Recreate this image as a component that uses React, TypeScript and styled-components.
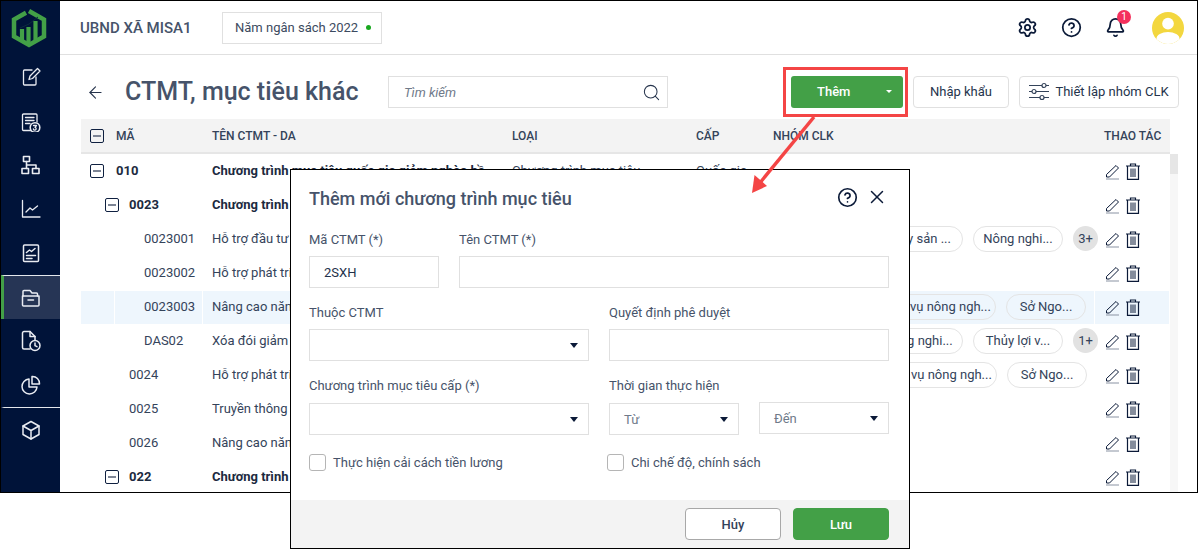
import React from "react";
import styled, { createGlobalStyle } from "styled-components";
import { Bell, CircleHelp, Settings, X, ArrowLeft, Search } from "lucide-react";

const GlobalStyle = createGlobalStyle`
  html, body {
    margin: 0;
    padding: 0;
    background: #fff;
    font-family: Roboto, "Liberation Sans", sans-serif;
    font-size: 13px;
    color: #1c2a40;
  }
  * { box-sizing: border-box; }
`;

const Page = styled.div`
  position: relative;
  width: 1198px;
  height: 549px;
  overflow: hidden;
`;

const Frame = styled.div`
  display: flex;
  width: 1198px;
  height: 493px;
  border: 1px solid #000;
  overflow: hidden;
`;

const Sidebar = styled.nav`
  width: 59px;
  flex: none;
  background: #001339;
  display: flex;
  flex-direction: column;
`;

const LogoBox = styled.div`
  height: 54px;
  display: flex;
  align-items: center;
  justify-content: center;
  padding-right: 3px;
`;

const NavItem = styled.div<{ $active?: boolean; $ruled?: boolean }>`
  height: 44px;
  display: flex;
  align-items: center;
  justify-content: center;
  background: ${(p) => (p.$active ? "#263555" : "transparent")};
  border-left: 3px solid ${(p) => (p.$active ? "#43a047" : "transparent")};
  border-top: ${(p) => (p.$ruled ? "1px solid #e4e7ec" : "0")};
  padding-right: 3px;
`;

const Main = styled.div`
  flex: 1;
  min-width: 0;
  display: flex;
  flex-direction: column;
`;

const Header = styled.header`
  height: 54px;
  flex: none;
  border-bottom: 1px solid #e0e0e0;
  display: flex;
  align-items: center;
  padding: 0 13px 0 20px;
`;

const OrgName = styled.div`
  font-size: 15px;
  font-weight: 500;
  color: #46536a;
  width: 142px;
`;

const YearBox = styled.div`
  width: 160px;
  height: 32px;
  border: 1px solid #e0e0e0;
  display: flex;
  align-items: center;
  justify-content: space-between;
  padding: 0 10px 1px 12px;
  color: #3c4a60;
`;

const GreenDot = styled.span`
  width: 5px;
  height: 5px;
  border-radius: 50%;
  background: #19a81f;
`;

const HeaderIcons = styled.div`
  margin-left: auto;
  display: flex;
  align-items: center;
  color: #0b1a38;
`;

const HeaderIcon = styled.div`
  width: 44px;
  padding-bottom: 1px;
  display: flex;
  align-items: center;
  justify-content: center;
  position: relative;
`;

const Badge = styled.span`
  position: absolute;
  top: -7px;
  left: 24px;
  width: 14px;
  height: 14px;
  border-radius: 50%;
  background: #f4305c;
  color: #fff;
  font-size: 10px;
  line-height: 14px;
  text-align: center;
`;

const Avatar = styled.div`
  width: 32px;
  height: 32px;
  margin-left: 15px;
  border-radius: 50%;
  background: #f3d73f;
  overflow: hidden;
`;

const TitleBar = styled.div`
  height: 64px;
  flex: none;
  display: flex;
  align-items: flex-start;
  padding: 21px 18px 0 26px;
  color: #26344c;
`;

const BackButton = styled.div`
  width: 39px;
  height: 32px;
  display: flex;
  align-items: center;
`;

const PageTitle = styled.h1`
  margin: 0;
  width: 263px;
  font-size: 25px;
  line-height: 32px;
  font-weight: 500;
  color: #46536a;
  white-space: nowrap;
`;

const SearchBox = styled.div`
  width: 280px;
  height: 32px;
  border: 1px solid #e0e0e0;
  display: flex;
  align-items: center;
  justify-content: space-between;
  padding: 0 6px 0 15px;
  font-style: italic;
  color: #6f7a8a;
`;

const Toolbar = styled.div`
  margin-left: auto;
  display: flex;
  gap: 10px;
`;

const AddButton = styled.div`
  width: 112px;
  height: 32px;
  background: #43a047;
  border-radius: 3px;
  color: #fff;
  font-weight: 500;
  display: flex;
  align-items: center;
  padding: 0 0 1px 26px;
  gap: 36px;
`;

const SmallCaret = styled.span`
  width: 0;
  height: 0;
  border-left: 3.5px solid transparent;
  border-right: 3.5px solid transparent;
  border-top: 3.5px solid #fff;
`;

const OutlineButton = styled.div<{ $width: number }>`
  width: ${(p) => p.$width}px;
  height: 32px;
  border: 1px solid #e0e0e0;
  border-radius: 4px;
  padding-bottom: 1px;
  display: flex;
  align-items: center;
  justify-content: center;
  gap: 6px;
  color: #25344c;
`;

const TableArea = styled.div`
  flex: 1;
  min-height: 0;
  margin-left: 21px;
  margin-right: 19px;
  display: flex;
  flex-direction: column;
`;

const columns = "122px 300px 184px 77px 331px 75px";

const HeadRow = styled.div`
  width: 1089px;
  height: 35px;
  flex: none;
  display: grid;
  grid-template-columns: ${columns};
  align-items: center;
  background: #f3f3f3;
  border-bottom: 2px solid #e6e6e6;
  font-size: 12px;
  font-weight: 500;
  color: #34435a;
`;

const HeadCell = styled.div`
  padding-left: 9px;
  white-space: nowrap;
`;

const HeadCode = styled.div`
  display: flex;
  align-items: center;
`;

const TableBody = styled.div`
  flex: 1;
  min-height: 0;
  display: flex;
`;

const Rows = styled.div`
  width: 1089px;
  flex: none;
`;

const ScrollTrack = styled.div`
  width: 8px;
  background: #f7f7f7;
`;

const ScrollThumb = styled.div`
  height: 20px;
  background: #e6e6e6;
`;

const Row = styled.div`
  height: 34px;
  display: grid;
  grid-template-columns: ${columns};
  align-items: stretch;
`;

const Cell = styled.div<{ $hl?: boolean; $bold?: boolean }>`
  padding: 0 0 2px 9px;
  display: flex;
  align-items: center;
  margin-top: 1px;
  min-width: 0;
  white-space: nowrap;
  overflow: hidden;
  font-weight: ${(p) => (p.$bold ? 700 : 400)};
  color: ${(p) => (p.$bold ? "#1c2a40" : "#34435a")};
  background: ${(p) => (p.$hl ? "#eef6fd" : "transparent")};
  border-right: ${(p) => (p.$hl ? "1px solid #fff" : "0")};
`;

const CodeCell = styled(Cell)<{ $indent: number }>`
  padding-left: ${(p) => p.$indent}px;
  background: ${(p) =>
    p.$hl
      ? "linear-gradient(to right, #eef6fd 33px, #fff 33px, #fff 34px, #eef6fd 34px)"
      : "transparent"};
`;

const GroupCell = styled(Cell)<{ $trail?: number }>`
  justify-content: flex-end;
  gap: 10px;
  overflow: visible;
  padding-right: ${(p) => p.$trail ?? 0}px;
`;

const ActionCell = styled(Cell)`
  padding: 0 0 0 10px;
  gap: 6px;
  color: #0b1a38;
`;

const Toggle = styled.span<{ $gap: number }>`
  width: 14px;
  height: 14px;
  flex: none;
  margin-right: ${(p) => p.$gap}px;
  border: 1px solid #0f2040;
  border-radius: 2px;
  display: flex;
  align-items: center;
  justify-content: center;
  &::after {
    content: "";
    width: 8px;
    height: 2px;
    background: #7d8595;
  }
`;

const Chip = styled.span<{ $width: number }>`
  width: ${(p) => p.$width}px;
  height: 26px;
  flex: none;
  border: 1px solid #e4e4e4;
  border-radius: 13px;
  background: transparent;
  display: flex;
  align-items: center;
  justify-content: center;
  font-weight: 400;
  color: #34435a;
`;

const MoreChip = styled.span`
  width: 25px;
  height: 25px;
  flex: none;
  border-radius: 50%;
  background: #e2e2e2;
  margin-right: -3px;
  display: flex;
  align-items: center;
  justify-content: center;
  color: #34435a;
`;

const Modal = styled.section`
  position: absolute;
  left: 290px;
  top: 169px;
  width: 620px;
  height: 380px;
  background: #fff;
  border: 1px solid #000;
  display: flex;
  flex-direction: column;
`;

const ModalHead = styled.div`
  height: 60px;
  flex: none;
  display: flex;
  align-items: center;
  padding: 0 21px 4px 18px;
`;

const ModalTitle = styled.h2`
  margin: 0;
  font-size: 18px;
  font-weight: 500;
  color: #46536a;
`;

const ModalTools = styled.div`
  margin-left: auto;
  margin-bottom: 2px;
  display: flex;
  align-items: center;
  gap: 8px;
  color: #0b1a38;
`;

const ModalBody = styled.div`
  flex: 1;
  padding: 0 20px 0 18px;
  display: flex;
  flex-direction: column;
`;

const FormRow = styled.div`
  display: flex;
  gap: 20px;
  height: 73px;
`;

const Field = styled.div<{ $width: number }>`
  width: ${(p) => p.$width}px;
  flex: none;
`;

const FieldLabel = styled.div`
  height: 26px;
  line-height: 20px;
  color: #46536a;
  white-space: nowrap;
`;

const Input = styled.div<{ $shift?: number }>`
  height: 32px;
  margin-top: ${(p) => p.$shift ?? 0}px;
  border: 1px solid #e0e0e0;
  display: flex;
  align-items: center;
  justify-content: space-between;
  padding: 0 14px;
  color: #22314a;
`;

const SelectInput = styled(Input)`
  padding-right: 10px;
`;

const Muted = styled.span`
  color: #6f7a8a;
`;

const Caret = styled.span`
  width: 0;
  height: 0;
  margin-left: auto;
  border-left: 4.5px solid transparent;
  border-right: 4.5px solid transparent;
  border-top: 5px solid #0b1a38;
`;

const TimeRange = styled.div`
  display: flex;
  gap: 20px;
`;

const TimeSelect = styled.div`
  width: 130px;
`;

const CheckRow = styled.div`
  display: flex;
  margin-top: 5px;
`;

const CheckItem = styled.label<{ $width: number }>`
  width: ${(p) => p.$width}px;
  display: flex;
  align-items: center;
  gap: 7px;
  color: #46536a;
`;

const CheckBox = styled.span`
  width: 17px;
  height: 17px;
  border: 1px solid #b5b5b5;
  border-radius: 3px;
`;

const ModalFoot = styled.div`
  height: 48px;
  flex: none;
  background: #f3f3f3;
  display: flex;
  align-items: center;
  justify-content: flex-end;
  gap: 12px;
  padding: 0 20px 0 0;
`;

const CancelButton = styled.div`
  width: 96px;
  height: 32px;
  background: #fff;
  border: 1px solid #a8a8a8;
  border-radius: 4px;
  display: flex;
  align-items: center;
  justify-content: center;
  font-weight: 500;
  color: #34435a;
`;

const SaveButton = styled(CancelButton)`
  background: #43a047;
  border-color: #43a047;
  color: #fff;
`;

const HighlightBox = styled.div`
  position: absolute;
  left: 783px;
  top: 67px;
  width: 125px;
  height: 50px;
  border: 3px solid #f44545;
  pointer-events: none;
`;

const ArrowOverlay = styled.svg`
  position: absolute;
  left: 745px;
  top: 112px;
  pointer-events: none;
`;

const stroke = { fill: "none", stroke: "#e9ecf2", strokeWidth: 1.3, strokeLinecap: "round", strokeLinejoin: "round" } as const;

function Logo() {
  return (
    <svg width="36" height="40" viewBox="0 0 36 40">
      <path d="M18 3 L33 11.5 V28.5 L18 37 L3 28.5 V11.5 L15 4.8" fill="none" stroke="#43a047" strokeWidth="4.5" strokeLinejoin="miter" />
      <path d="M11 21 V32 M17.5 19 V35 M24.5 13 V32" stroke="#43a047" strokeWidth="4.2" fill="none" />
      <path d="M9 20 L18 16 L27 9" stroke="#0c2a3e" strokeWidth="1" fill="none" />
    </svg>
  );
}

const navIcons = [
  <svg width="20" height="20" viewBox="0 0 20 20" {...stroke}>
    <path d="M11 3 H3.5 a1 1 0 0 0 -1 1 V17 a1 1 0 0 0 1 1 H14 a1 1 0 0 0 1 -1 V10" />
    <path d="M16.5 1.5 L19 4 L11.5 11.5 L8 12.5 L9 9 Z" />
  </svg>,
  <svg width="20" height="22" viewBox="0 -2 20 22" {...stroke}>
    <path d="M10 18.5 H2.5 a1 1 0 0 1 -1 -1 V3 a1 1 0 0 1 1 -1 H15 a1 1 0 0 1 1 1 V10" />
    <path d="M4.5 5.5 H13 M4.5 8.5 H13 M4.5 11.5 H9" />
    <circle cx="14" cy="15.5" r="4.8" strokeWidth="1.6" />
    <path d="M12.5 13.5 H15.5 L14 15.3 a1.4 1.4 0 1 1 -1.6 1.7" />
  </svg>,
  <svg width="20" height="20" viewBox="0 0 20 20" {...stroke} strokeWidth="1.6">
    <rect x="2.5" y="1.5" width="6" height="5" />
    <rect x="1" y="13.5" width="6.5" height="5" />
    <rect x="11.5" y="13.5" width="6.5" height="5" />
    <path d="M5.5 6.5 V10 H15 V13.5 M5.5 10 V13.5" />
  </svg>,
  <svg width="20" height="20" viewBox="0 0 20 20" {...stroke}>
    <path d="M1.5 1.5 V18 H19" />
    <path d="M5 13 L9 9 L11.5 11 L16.5 7" />
  </svg>,
  <svg width="18" height="20" viewBox="0 0 18 20" {...stroke} strokeWidth="1.5">
    <rect x="1.5" y="2" width="15" height="16.5" rx="1" />
    <path d="M4.5 9.5 L7.5 7 L9.5 8.5 L13 5.5 M4.5 12.5 H13.5 M4.5 15.5 H10" />
  </svg>,
  <svg width="20" height="20" viewBox="0 0 20 20" {...stroke} strokeWidth="1.5">
    <path d="M2 8 V3.5 a1 1 0 0 1 1 -1 H9 L11 5 H15.5 a1 1 0 0 1 1 1 V8" />
    <path d="M1.5 8 H18 V17 a1 1 0 0 1 -1 1 H2.5 a1 1 0 0 1 -1 -1 Z" />
    <path d="M7 12 H12.5" />
  </svg>,
  <svg width="20" height="22" viewBox="0 0 20 22" {...stroke} strokeWidth="1.5">
    <path d="M9 19 H3 a1.5 1.5 0 0 1 -1.5 -1.5 V3 a1.5 1.5 0 0 1 1.5 -1.5 H9 L14 6.5 V10" />
    <path d="M9 1.5 V6.5 H14" />
    <circle cx="14" cy="15.5" r="5" />
    <path d="M14 13 V15.7 L16 16.7" />
  </svg>,
  <svg width="20" height="20" viewBox="0 0 20 20" {...stroke} strokeWidth="1.5">
    <path d="M8 4 A7.5 7.5 0 1 0 16 12 H8 Z" />
    <path d="M11 1.5 A7 7 0 0 1 18.5 9 H11 Z" />
  </svg>,
  <svg width="20" height="20" viewBox="0 0 20 20" {...stroke} strokeWidth="1.5">
    <path d="M10 1.5 L18 6 V14.5 L10 19 L2 14.5 V6 Z" />
    <path d="M2 6 L10 10.5 L18 6 M10 10.5 V19" />
  </svg>,
];

function PencilIcon() {
  return (
    <svg width="15" height="16" viewBox="0 0 15 16" fill="none" stroke="currentColor" strokeWidth="1">
      <path d="M11 1.5 L13.5 4 L4.5 13 H1.5 L1.5 10.5 Z" strokeLinejoin="round" />
      <path d="M1 15 H14" strokeWidth="1" stroke="#8a93a3" />
    </svg>
  );
}

function TrashIcon() {
  return (
    <svg width="14" height="17" viewBox="0 0 14 17" fill="none" stroke="currentColor" strokeWidth="1.2">
      <path d="M0 3 H14 M4.5 3 V1 H9.5 V3" />
      <path d="M1.5 3 V16.4 H12.5 V3" />
      <path d="M5 5.5 V14 M7 5.5 V14 M9 5.5 V14" strokeWidth="1" />
    </svg>
  );
}

function SlidersIcon() {
  return (
    <svg width="20" height="19" viewBox="0 0 20 19" fill="none" stroke="#34435a" strokeWidth="1.2">
      <path d="M0 3.5 H13 M17 3.5 H20 M0 9.5 H3 M7 9.5 H20 M0 15.5 H11 M15 15.5 H20" />
      <circle cx="15" cy="3.5" r="2" />
      <circle cx="5" cy="9.5" r="2" />
      <circle cx="13" cy="15.5" r="2" />
    </svg>
  );
}

type ChipDef = { label: string; width: number };
type RowDef = {
  code: string;
  name: string;
  indent: number;
  toggle?: boolean;
  bold?: boolean;
  hl?: boolean;
  type?: string;
  level?: string;
  chips?: ChipDef[];
  more?: string;
  trail?: number;
};

const rows: RowDef[] = [
  { code: "010", name: "Chương trình mục tiêu quốc gia giảm nghèo bề...", indent: 9, toggle: true, bold: true, type: "Chương trình mục tiêu", level: "Quốc gia" },
  { code: "0023", name: "Chương trình mục tiêu giảm nghèo", indent: 24, toggle: true, bold: true },
  {
    code: "0023001",
    name: "Hỗ trợ đầu tư cơ sở hạ tầng",
    indent: 63,
    chips: [
      { label: "Thủy sản ...", width: 90 },
      { label: "Nông nghi...", width: 90 },
    ],
    more: "3+",
  },
  { code: "0023002", name: "Hỗ trợ phát triển sản xuất", indent: 63 },
  {
    code: "0023003",
    name: "Nâng cao năng lực giảm nghèo",
    indent: 63,
    hl: true,
    chips: [
      { label: "Dịch vụ nông ngh...", width: 120 },
      { label: "Sở Ngo...", width: 80 },
    ],
    trail: 8,
  },
  {
    code: "DAS02",
    name: "Xóa đói giảm nghèo",
    indent: 63,
    chips: [
      { label: "Nông nghi...", width: 90 },
      { label: "Thủy lợi v...", width: 90 },
    ],
    more: "1+",
  },
  {
    code: "0024",
    name: "Hỗ trợ phát triển sản xuất",
    indent: 48,
    chips: [
      { label: "Dịch vụ nông ngh...", width: 120 },
      { label: "Sở Ngo...", width: 80 },
    ],
    trail: 8,
  },
  { code: "0025", name: "Truyền thông và giảm nghèo", indent: 48 },
  { code: "0026", name: "Nâng cao năng lực", indent: 48 },
  { code: "022", name: "Chương trình mục tiêu khác", indent: 24, toggle: true, bold: true },
];

function TableRow({ row }: { row: RowDef }) {
  return (
    <Row>
      <CodeCell $indent={row.indent} $hl={row.hl} $bold={row.bold}>
        {row.toggle && <Toggle $gap={row.indent === 9 ? 12 : 10} />}
        {row.code}
      </CodeCell>
      <Cell $hl={row.hl} $bold={row.bold}>{row.name}</Cell>
      <Cell $hl={row.hl}>{row.type}</Cell>
      <Cell $hl={row.hl}>{row.level}</Cell>
      <GroupCell $hl={row.hl} $trail={row.trail}>
        {row.chips?.map((c) => (
          <Chip key={c.label} $width={c.width}>{c.label}</Chip>
        ))}
        {row.more && <MoreChip>{row.more}</MoreChip>}
      </GroupCell>
      <ActionCell $hl={row.hl}>
        <PencilIcon />
        <TrashIcon />
      </ActionCell>
    </Row>
  );
}

export default function App() {
  return (
    <Page>
      <GlobalStyle />
      <Frame>
        <Sidebar>
          <LogoBox>
            <Logo />
          </LogoBox>
          {navIcons.map((icon, i) => (
            <NavItem key={i} $active={i === 5} $ruled={i === 5 || i === 8}>
              {icon}
            </NavItem>
          ))}
        </Sidebar>
        <Main>
          <Header>
            <OrgName>UBND XÃ MISA1</OrgName>
            <YearBox>
              Năm ngân sách 2022
              <GreenDot />
            </YearBox>
            <HeaderIcons>
              <HeaderIcon>
                <Settings size={21} strokeWidth={2} />
              </HeaderIcon>
              <HeaderIcon>
                <CircleHelp size={21} strokeWidth={2} />
              </HeaderIcon>
              <HeaderIcon>
                <Bell size={21} strokeWidth={2} />
                <Badge>1</Badge>
              </HeaderIcon>
              <Avatar>
                <svg width="32" height="32" viewBox="0 0 33 33">
                  <circle cx="16.5" cy="12" r="6" fill="#fff" />
                  <ellipse cx="16.5" cy="28" rx="12" ry="7.5" fill="#fff" />
                </svg>
              </Avatar>
            </HeaderIcons>
          </Header>
          <TitleBar>
            <BackButton>
              <ArrowLeft size={19} strokeWidth={1.4} />
            </BackButton>
            <PageTitle>CTMT, mục tiêu khác</PageTitle>
            <SearchBox>
              Tìm kiếm
              <Search size={19} strokeWidth={1.3} color="#26344c" />
            </SearchBox>
            <Toolbar>
              <AddButton>
                Thêm
                <SmallCaret />
              </AddButton>
              <OutlineButton $width={96}>Nhập khẩu</OutlineButton>
              <OutlineButton $width={160}>
                <SlidersIcon />
                Thiết lập nhóm CLK
              </OutlineButton>
            </Toolbar>
          </TitleBar>
          <TableArea>
            <HeadRow>
              <HeadCell>
                <HeadCode>
                  <Toggle $gap={12} />
                  MÃ
                </HeadCode>
              </HeadCell>
              <HeadCell>TÊN CTMT - DA</HeadCell>
              <HeadCell>LOẠI</HeadCell>
              <HeadCell>CẤP</HeadCell>
              <HeadCell>NHÓM CLK</HeadCell>
              <HeadCell>THAO TÁC</HeadCell>
            </HeadRow>
            <TableBody>
              <Rows>
                {rows.map((r) => (
                  <TableRow key={r.code} row={r} />
                ))}
              </Rows>
              <ScrollTrack>
                <ScrollThumb />
              </ScrollTrack>
            </TableBody>
          </TableArea>
        </Main>
      </Frame>

      <Modal>
        <ModalHead>
          <ModalTitle>Thêm mới chương trình mục tiêu</ModalTitle>
          <ModalTools>
            <CircleHelp size={21} strokeWidth={1.9} />
            <X size={22} strokeWidth={1.6} />
          </ModalTools>
        </ModalHead>
        <ModalBody>
          <FormRow>
            <Field $width={130}>
              <FieldLabel>Mã CTMT (*)</FieldLabel>
              <Input>2SXH</Input>
            </Field>
            <Field $width={430}>
              <FieldLabel>Tên CTMT (*)</FieldLabel>
              <Input />
            </Field>
          </FormRow>
          <FormRow>
            <Field $width={280}>
              <FieldLabel>Thuộc CTMT</FieldLabel>
              <SelectInput>
                <Caret />
              </SelectInput>
            </Field>
            <Field $width={280}>
              <FieldLabel>Quyết định phê duyệt</FieldLabel>
              <Input />
            </Field>
          </FormRow>
          <FormRow>
            <Field $width={280}>
              <FieldLabel>Chương trình mục tiêu cấp (*)</FieldLabel>
              <SelectInput $shift={1}>
                <Caret />
              </SelectInput>
            </Field>
            <Field $width={280}>
              <FieldLabel>Thời gian thực hiện</FieldLabel>
              <TimeRange>
                <TimeSelect>
                  <SelectInput $shift={1}>
                    <Muted>Từ</Muted>
                    <Caret />
                  </SelectInput>
                </TimeSelect>
                <TimeSelect>
                  <SelectInput>
                    <Muted>Đến</Muted>
                    <Caret />
                  </SelectInput>
                </TimeSelect>
              </TimeRange>
            </Field>
          </FormRow>
          <CheckRow>
            <CheckItem $width={298}>
              <CheckBox />
              Thực hiện cải cách tiền lương
            </CheckItem>
            <CheckItem $width={280}>
              <CheckBox />
              Chi chế độ, chính sách
            </CheckItem>
          </CheckRow>
        </ModalBody>
        <ModalFoot>
          <CancelButton>Hủy</CancelButton>
          <SaveButton>Lưu</SaveButton>
        </ModalFoot>
      </Modal>

      <HighlightBox />
      <ArrowOverlay width="80" height="90" viewBox="0 0 80 90">
        <path d="M69 5 L14 72" stroke="#f44545" strokeWidth="3.5" fill="none" />
        <path d="M7 81 L9.5 63 L22 74 Z" fill="#f44545" />
      </ArrowOverlay>
    </Page>
  );
}
